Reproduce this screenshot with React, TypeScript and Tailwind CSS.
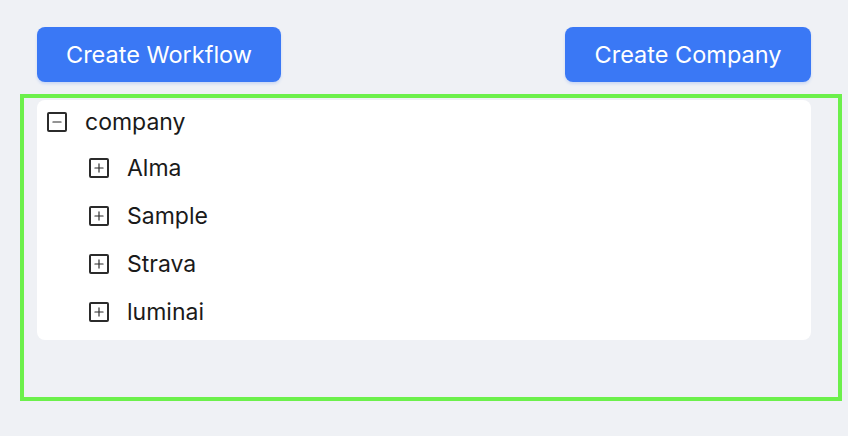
import { Minus, Plus } from 'lucide-react';

const companies = ['Alma', 'Sample', 'Strava', 'luminai'];

function ToggleBox({ open }: { open: boolean }) {
  return (
    <span className="flex h-[20px] w-[20px] items-center justify-center rounded-[2px] border-2 border-[#2b2b2b] text-[#2b2b2b]">
      {open ? <Minus size={14} strokeWidth={2} /> : <Plus size={14} strokeWidth={2} />}
    </span>
  );
}

export default function App() {
  return (
    <div className="min-h-screen bg-[#eff1f5] pt-[27px] font-['Inter',sans-serif]">
      {/* Top actions */}
      <div className="mx-[37px] flex items-center justify-between">
        <button className="h-[55px] w-[244px] rounded-lg bg-[#3a78f5] text-[23.5px] text-white shadow-[0_2px_3px_rgba(58,120,245,0.2)]">
          Create Workflow
        </button>
        <button className="h-[55px] w-[246px] rounded-lg bg-[#3a78f5] text-[23.5px] text-white shadow-[0_2px_3px_rgba(58,120,245,0.2)]">
          Create Company
        </button>
      </div>

      {/* Tree panel */}
      <div className="ml-[20px] mr-[6px] mt-3 h-[307px] border-4 border-[#6cf04b] pl-[13px] pr-[27px] pt-[2px]">
        <div className="rounded-lg bg-white pb-1 text-[23px] text-[#1a1a1a]">
          <div className="flex h-[44px] items-center gap-[18px] pl-[10px]">
            <ToggleBox open />
            <span>company</span>
          </div>
          {companies.map((name) => (
            <div key={name} className="flex h-12 items-center gap-[18px] pl-[52px]">
              <ToggleBox open={false} />
              <span>{name}</span>
            </div>
          ))}
        </div>
      </div>
    </div>
  );
}
